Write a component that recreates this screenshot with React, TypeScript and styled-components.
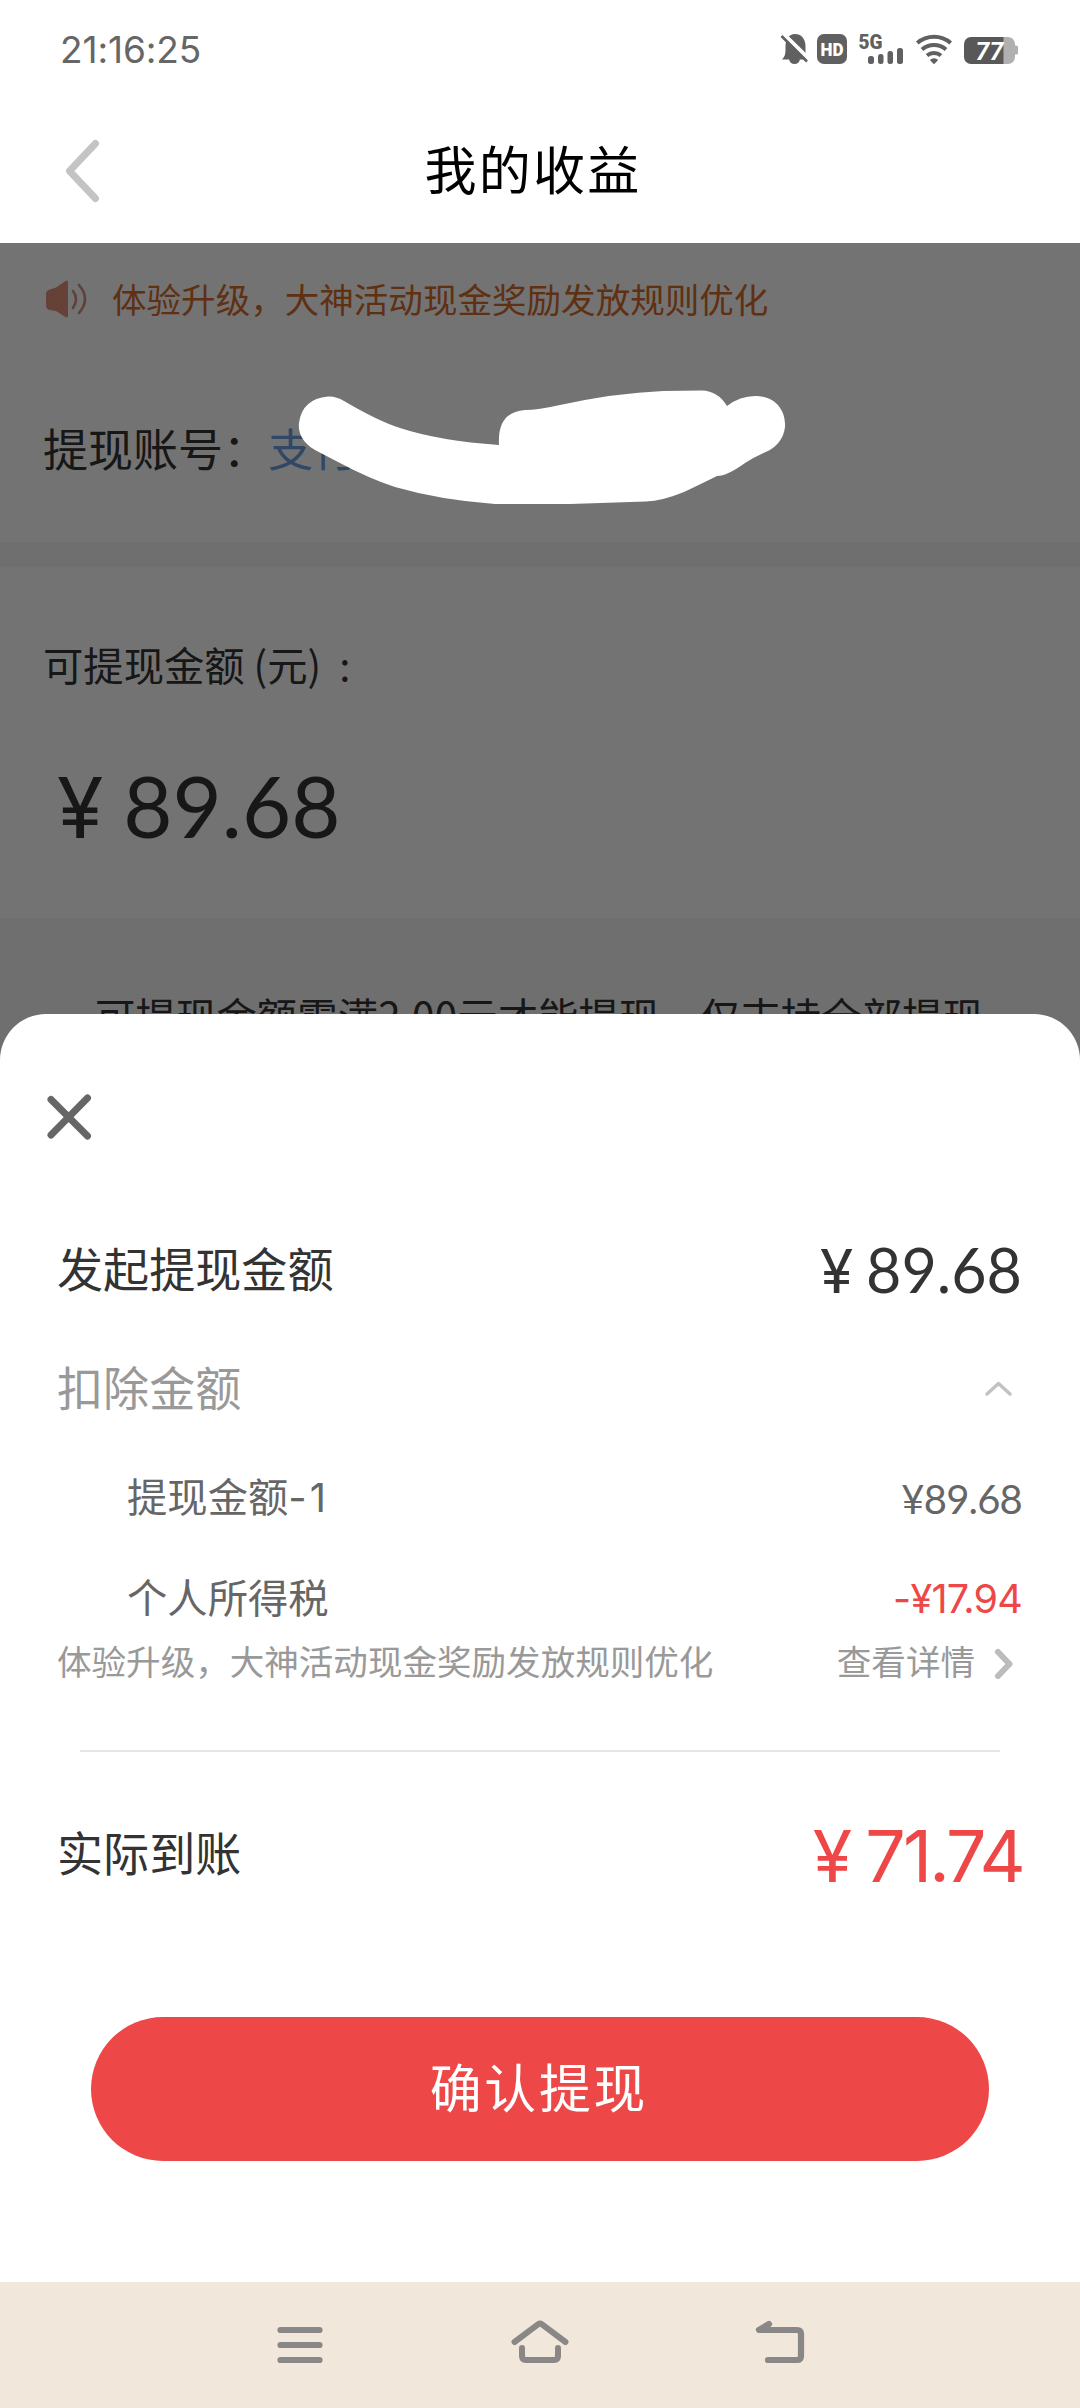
import React from "react";
import styled, { createGlobalStyle } from "styled-components";

const cjk = `"Noto Sans CJK SC", "Noto Sans", sans-serif`;

const GlobalStyle = createGlobalStyle`
  * { box-sizing: border-box; }
  body { margin: 0; background: #fff; font-family: ${cjk}; }
  svg { display: block; flex: none; }
`;

const Screen = styled.main`
  width: 1080px;
  height: 2408px;
  display: flex;
  flex-direction: column;
  overflow: hidden;
  background: #fff;
`;

const StatusBar = styled.header`
  height: 98px;
  flex: none;
  display: flex;
  align-items: center;
  justify-content: space-between;
  padding: 0 60px 0 60px;
`;

const Clock = styled.time`
  padding-top: 1px;
  font: 400 37px/40px "Inter", sans-serif;
  letter-spacing: -0.1px;
  color: #666;
`;

const TitleBar = styled.div`
  height: 145px;
  flex: none;
  display: grid;
  grid-template-columns: 120px 1fr 120px;
  align-items: center;
  padding-bottom: 6px;
`;

const BackButton = styled.button`
  border: 0;
  background: none;
  padding: 6px 0 0 62px;
`;

const Title = styled.h1`
  margin: 0;
  text-align: center;
  font-size: 52px;
  font-weight: 400;
  line-height: 60px;
  letter-spacing: 2.2px;
  text-indent: -14px;
  color: #000;
`;

const Page = styled.section`
  position: relative;
  flex: 1;
  overflow: hidden;
  background: #f5f5f5;
  color: #333;
`;

const Panel = styled.div<{ $h: number }>`
  height: ${(p) => p.$h}px;
  background: #fff;
  margin-bottom: 25px;
`;

const Notice = styled.div`
  display: flex;
  align-items: center;
  gap: 25px;
  height: 110px;
  padding-left: 45px;
  font-size: 34.56px;
  color: #d56a2a;
`;

const Account = styled.div`
  display: flex;
  align-items: center;
  height: 188px;
  padding-left: 43px;
  font-size: 45px;
`;

const AccountName = styled.span`
  color: #6a9fe0;
`;

const BalanceLabel = styled.div`
  padding: 67px 0 0 43px;
  font-size: 40.32px;
  line-height: 60px;
  white-space: pre;
`;

const Tip = styled.p`
  margin: 0;
  padding: 42px 0 0 95px;
  font-size: 40.32px;
  line-height: 60px;
  letter-spacing: 0.15px;
  white-space: nowrap;
`;

const Mask = styled.div`
  position: absolute;
  inset: 0;
  background: rgba(0, 0, 0, 0.55);
`;

const Scribble = styled.svg`
  position: absolute;
  left: 290px;
  top: 127px;
`;

const Sheet = styled.section`
  position: absolute;
  left: 0;
  right: 0;
  top: 771px;
  bottom: 0;
  display: flex;
  flex-direction: column;
  border-radius: 46px 46px 0 0;
  background: #fff;
`;

const CloseButton = styled.button`
  display: block;
  height: 186px;
  padding: 78px 0 60px 45px;
  border: 0;
  background: none;
`;

const Row = styled.div<{ $h: number; $size?: number; $color?: string; $left?: number; $right?: number }>`
  flex: none;
  height: ${(p) => p.$h}px;
  display: flex;
  align-items: center;
  justify-content: space-between;
  padding: 0 ${(p) => p.$right ?? 58}px 0 ${(p) => p.$left ?? 57}px;
  font-size: ${(p) => p.$size ?? 46.08}px;
  line-height: 1.2;
  color: ${(p) => p.$color ?? "#333"};
`;

const Label = styled.span<{ $lift?: number }>`
  padding-bottom: ${(p) => p.$lift ?? 4}px;
`;

const Suffix = styled.span`
  font-family: "Inter", sans-serif;
  font-size: 40px;
  letter-spacing: 3px;
`;

const Money = styled.span<{ $size: number; $face: string; $gap?: number; $color?: string; $track?: number; $drop?: number }>`
  display: inline-flex;
  align-items: baseline;
  gap: ${(p) => p.$gap ?? 0}px;
  padding-top: ${(p) => p.$drop ?? 0}px;
  font-family: ${(p) => p.$face}, sans-serif;
  font-weight: 400;
  font-size: ${(p) => p.$size}px;
  line-height: 1.2;
  letter-spacing: ${(p) => p.$track ?? 0}px;
  color: ${(p) => p.$color ?? "inherit"};
`;

const Yen = styled.span`
  font-family: "Inter", sans-serif;
  font-size: 0.99em;
`;

const Balance = styled.div`
  padding: 60px 0 0 57px;
`;

const Detail = styled.span`
  display: flex;
  align-items: center;
  gap: 18px;
`;

const Divider = styled.hr`
  flex: none;
  width: 920px;
  height: 2px;
  margin: 64px auto 0;
  border: 0;
  background: #e6e6e6;
`;

const Confirm = styled.button`
  flex: none;
  width: 898px;
  height: 144px;
  margin: 61px auto 0;
  padding: 0 2px 6px 0;
  border: 0;
  border-radius: 72px;
  background: #ed4748;
  color: #fff;
  font: 400 51.84px/1.2 ${cjk};
  letter-spacing: 2.8px;
`;

const NavBar = styled.nav`
  flex: none;
  height: 126px;
  display: flex;
  justify-content: space-between;
  align-items: center;
  padding: 0 273px 2px;
  background: #f1e7db;
`;

const lato = `"Lato"`;
const plain = `"Inter"`;

const StatusIcons = () => (
  <svg width="240" height="40" viewBox="782 29 240 40" fill="#606060">
    <path d="M784 59.500c3-3 3.500-6 3.500-9.500v-3.500c0-7.500 3.500-12.500 9.500-12.500s10.500 4.500 10.500 12v13.500zM791 59h11c-.500 3.500-2.500 5-5.500 5s-5-1.500-5.500-5z" />
    <path d="M787 35.500 811.500 59.500" stroke="#fff" strokeWidth="4" />
    <path d="M783.500 36 809 61.500" stroke="#606060" strokeWidth="2.600" />
    <rect x="819" y="34" width="30" height="30" rx="7" />
    <text x="834" y="55.500" fill="#fff" fontFamily="Roboto, sans-serif" fontWeight="900" fontSize="17.500" textAnchor="middle" textLength="23" lengthAdjust="spacingAndGlyphs">HD</text>
    <text x="860.500" y="49" fontFamily="Roboto, sans-serif" fontWeight="900" fontSize="20" textLength="24" lengthAdjust="spacingAndGlyphs">5G</text>
    <rect x="870" y="56" width="6" height="8" rx="2.500" />
    <rect x="880" y="54" width="5.500" height="10" rx="2.500" />
    <rect x="889.500" y="51" width="5.500" height="13" rx="2.500" />
    <rect x="899" y="48" width="6" height="16" rx="2.500" />
    <g fill="none" stroke="#606060" strokeWidth="4">
      <path d="M919.300 43a25.500 25.500 0 0 1 33.400 0" />
      <path d="M924 49.500a18 18 0 0 1 24 0" />
      <path d="M929 55.500a11 11 0 0 1 14 0" />
    </g>
    <path d="M931.800 60a6.500 6.500 0 0 1 8.400 0L936 64.300z" />
    <path d="M1000 37h10a7 7 0 0 1 7 7v1.500h1.500q1.500 0 1.500 1.500v6q0 1.500-1.500 1.500H1017V57a7 7 0 0 1-7 7h-10z" fill="#b0b0b0" />
    <path d="M973 37h32.500v27H973a7 7 0 0 1-7-7V44a7 7 0 0 1 7-7z" fill="#585858" />
    <text x="991.500" y="60" fill="#fff" fontFamily="Roboto, sans-serif" fontWeight="700" fontStyle="italic" fontSize="25" textAnchor="middle">77</text>
  </svg>
);

export default function App() {
  return (
    <Screen>
      <GlobalStyle />
      <StatusBar>
        <Clock>21:16:25</Clock>
        <StatusIcons />
      </StatusBar>
      <TitleBar>
        <BackButton aria-label="返回">
          <svg width="42" height="66" viewBox="0 0 42 66" fill="none" stroke="#c4c4c4" strokeWidth="7" strokeLinecap="round" strokeLinejoin="round">
            <path d="M33.500 5.500 7.500 33l26 27.500" />
          </svg>
        </BackButton>
        <Title>我的收益</Title>
      </TitleBar>

      <Page>
        <Panel $h={299}>
          <Notice>
            <svg width="42" height="40" viewBox="0 0 42 40">
              <path d="M5 11.500 11 9.500 20.500 3q2.500-1.500 2.500 1.500v33q0 3-2.500 1.500L11 33 5 32q-4-1-4-4V15.500q0-3 4-4z" fill="#e0907c" />
              <g fill="none" stroke="#d0907f" strokeWidth="2.600" strokeLinecap="round">
                <path d="M28 13q6 8 0 17M34 7q12 14 0 28" />
              </g>
            </svg>
            体验升级，大神活动现金奖励发放规则优化
          </Notice>
          <Account>
            提现账号：<AccountName>支付宝</AccountName>
          </Account>
        </Panel>
        <Panel $h={351}>
          <BalanceLabel>{"可提现金额 (元)  :"}</BalanceLabel>
          <Balance>
            <Money $size={85} $face={lato} $gap={20}>
              <Yen>¥</Yen>
              <span>89.68</span>
            </Money>
          </Balance>
        </Panel>
        <Tip>可提现金额需满2.00元才能提现，仅支持全部提现</Tip>
        <Mask />
        <Scribble width="520" height="150" viewBox="0 0 520 150" fill="#fff">
          <path d="M38 26.500Q46 26 54 31Q88 51 110 58Q150 71 209 75Q207 42 235 40Q248 40 270 35Q325 23 373 21L412 20.500Q428 21 437 36Q450 26 465 26C486 26 496 41 495 57Q493 73 478 81Q466 86 455 93Q437 106 427 106Q413 113 394 122Q372 131 356 131.500L280 134H205Q150 130 105 117Q80 109 48 92L25 80C11 72 8 61 9 53Q12 29 38 26.500z" />
        </Scribble>

        <Sheet>
          <CloseButton aria-label="关闭">
            <svg width="48" height="48" viewBox="0 0 48 48" fill="none" stroke="#666" strokeWidth="7" strokeLinecap="round">
              <path d="M6 7.500 42.500 44M42.500 6 6 43" />
            </svg>
          </CloseButton>
          <Row $h={140}>
            <Label>发起提现金额</Label>
            <Money $size={61} $face={lato} $gap={13}>
              <Yen>¥</Yen>
              <span>89.68</span>
            </Money>
          </Row>
          <Row $h={98} $color="#999" $right={67}>
            <Label>扣除金额</Label>
            <svg width="30" height="20" viewBox="0 0 30 20" fill="none" stroke="#c2c2c2" strokeWidth="3.500" strokeLinecap="round" strokeLinejoin="round">
              <path d="M4 15 15.500 4.500 27 15" />
            </svg>
          </Row>
          <Row $h={120} $size={40.32} $color="#666" $left={127}>
            <Label>
              提现金额<Suffix>-1</Suffix>
            </Label>
            <Money $size={40} $face={lato} $track={-0.8} $drop={2}>¥89.68</Money>
          </Row>
          <Row $h={80} $size={40.32} $color="#666" $left={127}>
            <Label>个人所得税</Label>
            <Money $size={39.5} $face={plain} $color="#ed4748" $track={-0.8} $drop={4}>-¥17.94</Money>
          </Row>
          <Row $h={48} $size={34.56} $color="#999" $right={65}>
            <Label $lift={2}>体验升级，大神活动现金奖励发放规则优化</Label>
            <Detail>
              <Label $lift={2}>查看详情</Label>
              <svg width="22" height="34" viewBox="0 0 22 34" fill="none" stroke="#bcbcbc" strokeWidth="6" strokeLinejoin="round" strokeLinecap="round">
                <path d="M5 7 16.500 19 5 31" />
              </svg>
            </Detail>
          </Row>
          <Divider />
          <Row $h={204} $right={57}>
            <Label>实际到账</Label>
            <Money $size={71.5} $face={plain} $color="#ed4748" $gap={16} $track={-2.8} $drop={5}>
              <span>¥</span>
              <span>71.74</span>
            </Money>
          </Row>
          <Confirm>确认提现</Confirm>
        </Sheet>
      </Page>

      <NavBar>
        <svg width="54" height="60" viewBox="273 2314 54 60" stroke="#8a8886" strokeWidth="6.200" strokeLinecap="round">
          <path d="M280.500 2330h39M280.500 2345h39M280.500 2360h39" />
        </svg>
        <svg width="60" height="60" viewBox="510 2314 60 60" fill="none" stroke="#8a8886" strokeWidth="6" strokeLinecap="round" strokeLinejoin="round">
          <path d="M514.500 2342 538 2324.300q2-1.500 4 0L565.500 2342" />
          <path d="M522 2348v8q0 4 4 4h28q4 0 4-4v-8" />
        </svg>
        <svg width="54" height="60" viewBox="753 2314 54 60" fill="none" stroke="#8a8886" strokeWidth="6.200" strokeLinecap="round" strokeLinejoin="round">
          <path d="M769 2324 759 2330h38q4 0 4 4v22q0 4-4 4h-29" />
        </svg>
      </NavBar>
    </Screen>
  );
}
